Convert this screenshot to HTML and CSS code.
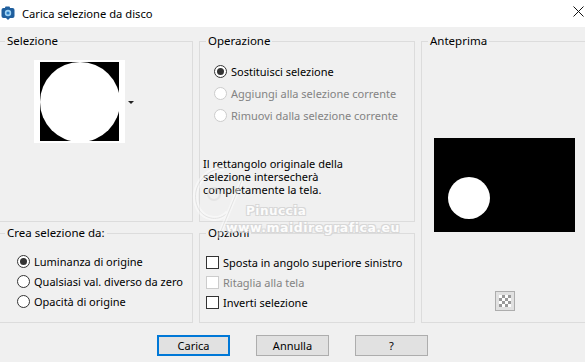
FILE: index.html
```html
<!DOCTYPE html>
<html lang="it">
<head>
    <meta charset="UTF-8">
    <title>Carica selezione da disco</title>
    <link rel="stylesheet" href="styles.css">
</head>
<body>
    <div class="window">
        <div class="titlebar">
            <svg class="app-icon" width="14" height="14" viewBox="0 0 14 14">
                <rect x="0.5" y="2" width="13" height="10" rx="2" fill="#1f5f9e"/>
                <rect x="4" y="0.5" width="5" height="3" rx="1" fill="#1f5f9e"/>
                <circle cx="7" cy="7" r="3.2" fill="#9fd3f5"/>
                <circle cx="7" cy="7" r="1.6" fill="#2a7cc4"/>
                <path d="M5 12 L7 14 L9 12 Z" fill="#1f5f9e"/>
            </svg>
            <span class="title">Carica selezione da disco</span>
            <svg class="close" width="11" height="11" viewBox="0 0 11 11">
                <path d="M0.5 0.5 L10.5 10.5 M10.5 0.5 L0.5 10.5" stroke="#111" stroke-width="1"/>
            </svg>
        </div>

        <div class="content">
            <div class="groups">
                <fieldset class="group group-sel no-left">
                    <legend>Selezione</legend>
                    <div class="thumb-row">
                        <div class="thumb">
                            <div class="thumb-img"><div class="thumb-circle"></div></div>
                        </div>
                        <span class="drop-arrow"></span>
                    </div>
                </fieldset>

                <fieldset class="group group-op">
                    <legend>Operazione</legend>
                    <div class="options op-options">
                        <div class="opt"><span class="radio checked"></span>Sostituisci selezione</div>
                        <div class="opt disabled"><span class="radio"></span>Aggiungi alla selezione corrente</div>
                        <div class="opt disabled"><span class="radio"></span>Rimuovi dalla selezione corrente</div>
                    </div>
                    <p class="note">Il rettangolo originale della<br>selezione intersecherà<br>completamente la tela.</p>
                </fieldset>

                <fieldset class="group group-prev">
                    <legend>Anteprima</legend>
                    <div class="preview">
                        <div class="preview-circle"></div>
                    </div>
                    <div class="checker-btn"><span class="checker"></span></div>
                </fieldset>

                <fieldset class="group group-crea no-left">
                    <legend>Crea selezione da:</legend>
                    <div class="options crea-options">
                        <div class="opt"><span class="radio checked"></span>Luminanza di origine</div>
                        <div class="opt"><span class="radio"></span>Qualsiasi val. diverso da zero</div>
                        <div class="opt"><span class="radio"></span>Opacità di origine</div>
                    </div>
                </fieldset>

                <fieldset class="group group-opz">
                    <legend>Opzioni</legend>
                    <div class="options opz-options">
                        <div class="opt"><span class="check"></span>Sposta in angolo superiore sinistro</div>
                        <div class="opt disabled"><span class="check"></span>Ritaglia alla tela</div>
                        <div class="opt"><span class="check"></span>Inverti selezione</div>
                    </div>
                </fieldset>
            </div>

            <div class="buttons">
                <button class="btn default">Carica</button>
                <button class="btn">Annulla</button>
                <button class="btn">?</button>
            </div>
        </div>

        <!-- watermark over the dialog -->
        <div class="watermark">
            <svg class="wm-logo" width="70" height="80" viewBox="0 0 70 80">
                <path d="M40 8 C18 10 6 30 14 48 C20 60 36 62 44 52" fill="none" stroke="#fff" stroke-width="5"/>
                <path d="M40 8 C18 10 6 30 14 48 C20 60 36 62 44 52" fill="none" stroke="#d6d6d6" stroke-width="1"/>
                <path d="M58 20 L34 78" fill="none" stroke="#fff" stroke-width="4"/>
                <path d="M58 20 L34 78" fill="none" stroke="#d6d6d6" stroke-width="1"/>
                <circle cx="30" cy="34" r="6" fill="none" stroke="#dadada" stroke-width="2"/>
            </svg>
            <div class="wm-name">Pinuccia</div>
            <div class="wm-site">www.maidiregrafica.eu</div>
        </div>
    </div>
</body>
</html>
```

FILE: styles.css
```css
body {
    margin: 0;
    padding: 0;
    background: #f0f0f0;
    font-family: "Noto Sans", "DejaVu Sans", sans-serif;
    font-size: 11px;
    color: #000;
    overflow: hidden;
}
.window {
    position: relative;
    width: 585px;
    height: 362px;
    overflow: hidden;
    background: #f0f0f0;
}
.titlebar {
    height: 27px;
    background: #fff;
    display: flex;
    align-items: center;
}
.app-icon {
    margin-left: 1px;
    margin-top: -1px;
}
.title {
    margin-left: 7px;
    font-size: 11.2px;
    color: #000;
}
.close {
    margin-left: auto;
    margin-right: 1px;
    margin-top: -5px;
}
.content {
    padding-top: 6px;
}
.groups {
    display: grid;
    grid-template-columns: 193px 216px 167px;
    grid-template-rows: 189px 98px;
    column-gap: 6px;
    row-gap: 3px;
}
.group {
    margin: 0;
    padding: 0;
    min-width: 0;
    border: 1px solid #dcdcdc;
}
.group.no-left {
    border-left: none;
}
.group legend {
    margin-left: 6px;
    padding: 0 2px;
    line-height: 16px;
    font-size: 11.5px;
}
.group.no-left legend {
    margin-left: 5px;
}
.group-prev {
    grid-row: 1 / span 2;
    grid-column: 3;
    display: flex;
    flex-direction: column;
    align-items: center;
}

/* Selezione */
.thumb-row {
    display: flex;
    align-items: center;
    margin-top: 11px;
    margin-left: 34px;
}
.thumb {
    background: #fff;
    padding: 2px 6px;
}
.thumb-img {
    width: 79px;
    height: 79px;
    background: #000;
    display: flex;
    align-items: center;
    justify-content: center;
    overflow: hidden;
}
.thumb-circle {
    width: 80px;
    height: 80px;
    flex: none;
    border-radius: 50%;
    background: #fff;
}
.drop-arrow {
    margin-left: 3px;
    margin-top: 2px;
    width: 0;
    height: 0;
    border-left: 3px solid transparent;
    border-right: 3px solid transparent;
    border-top: 3px solid #222;
}

/* radio and checkbox rows */
.options {
    display: flex;
    flex-direction: column;
}
.opt {
    height: 22px;
    display: flex;
    align-items: center;
    white-space: nowrap;
}
.opt.disabled {
    color: #838383;
}
.radio {
    width: 11px;
    height: 11px;
    border: 1px solid #333;
    border-radius: 50%;
    background: #fff;
    margin-right: 4px;
    display: flex;
    align-items: center;
    justify-content: center;
    flex: none;
}
.radio.checked::after {
    content: "";
    width: 7px;
    height: 7px;
    border-radius: 50%;
    background: #333;
}
.opt.disabled .radio,
.opt.disabled .check {
    border-color: #cccccc;
}
.check {
    width: 11px;
    height: 11px;
    border: 1px solid #333;
    background: #fff;
    margin-right: 4px;
    flex: none;
}
.op-options {
    margin-top: 11px;
    padding-left: 14px;
}
.crea-options {
    margin-top: 10px;
    padding-left: 17px;
}
.crea-options .opt,
.opz-options .opt {
    height: 20px;
}
.opz-options {
    margin-top: 11px;
    padding-left: 6px;
}
.note {
    margin: 31px 0 0 3px;
    line-height: 13px;
}

/* Anteprima */
.preview {
    margin-top: 89px;
    width: 141px;
    height: 94px;
    background: #000;
    display: flex;
    align-items: flex-end;
}
.preview-circle {
    width: 42px;
    height: 42px;
    border-radius: 50%;
    background: #fff;
    margin-left: 14px;
    margin-bottom: 13px;
}
.checker-btn {
    margin-top: 59px;
    width: 18px;
    height: 18px;
    border: 1px solid #adadad;
    background: #e1e1e1;
    display: flex;
    align-items: center;
    justify-content: center;
}
.checker {
    width: 12px;
    height: 12px;
    background-color: #fff;
    background-image:
        linear-gradient(45deg, #9a9a9a 25%, transparent 25%, transparent 75%, #9a9a9a 75%),
        linear-gradient(45deg, #9a9a9a 25%, transparent 25%, transparent 75%, #9a9a9a 75%);
    background-size: 6px 6px;
    background-position: 0 0, 3px 3px;
}

/* buttons */
.buttons {
    display: flex;
    justify-content: center;
    gap: 26px;
    margin-top: 12px;
}
.btn {
    width: 73px;
    height: 21px;
    background: #e1e1e1;
    border: 1px solid #adadad;
    font-family: "Noto Sans", "DejaVu Sans", sans-serif;
    font-size: 11px;
    color: #000;
    padding: 0;
}
.btn.default {
    border: 2px solid #0078d7;
}

/* watermark */
.watermark {
    position: absolute;
    left: 180px;
    top: 160px;
    width: 240px;
    height: 80px;
    pointer-events: none;
    opacity: 0.8;
}
.wm-logo {
    position: absolute;
    left: 4px;
    top: 0;
    opacity: 0.6;
}
.wm-name,
.wm-site {
    position: absolute;
    font-family: "DejaVu Sans", sans-serif;
    font-weight: bold;
    color: #fff;
    text-shadow: -1px -1px 0 #d2d2d2, 1px -1px 0 #d2d2d2, -1px 1px 0 #d2d2d2, 1px 1px 0 #d2d2d2;
    letter-spacing: 0.5px;
}
.wm-name {
    left: 66px;
    top: 44px;
    font-size: 12px;
}
.wm-site {
    left: 46px;
    top: 60px;
    font-size: 12.5px;
}
```
